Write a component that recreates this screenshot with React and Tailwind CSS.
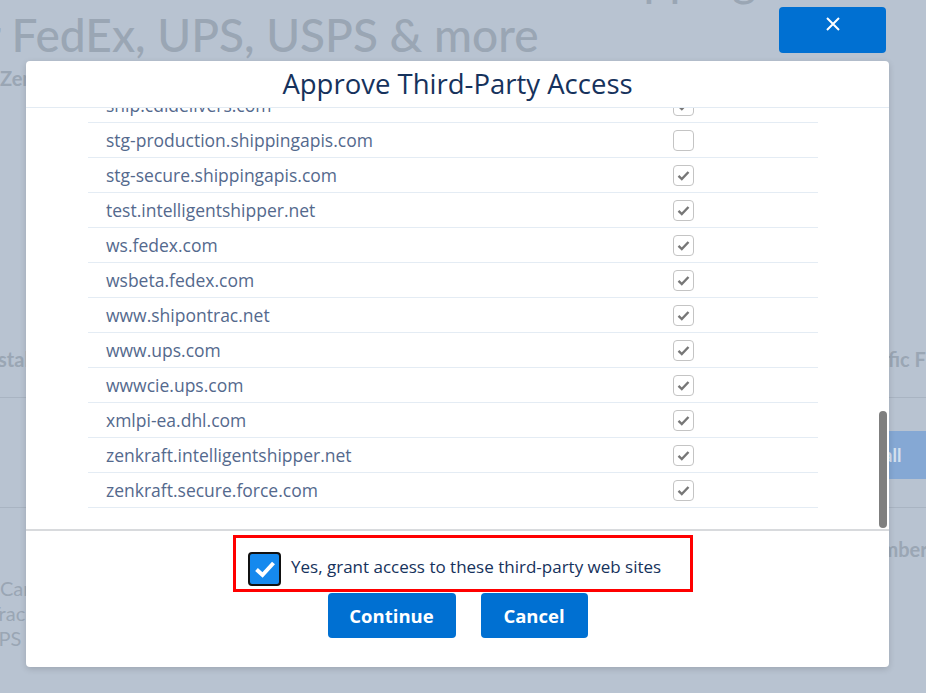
import { useState } from "react";

const domains = [
    { name: "ship.cdldelivers.com", checked: true },
    { name: "stg-production.shippingapis.com", checked: false },
    { name: "stg-secure.shippingapis.com", checked: true },
    { name: "test.intelligentshipper.net", checked: true },
    { name: "ws.fedex.com", checked: true },
    { name: "wsbeta.fedex.com", checked: true },
    { name: "www.shipontrac.net", checked: true },
    { name: "www.ups.com", checked: true },
    { name: "wwwcie.ups.com", checked: true },
    { name: "xmlpi-ea.dhl.com", checked: true },
    { name: "zenkraft.intelligentshipper.net", checked: true },
    { name: "zenkraft.secure.force.com", checked: true },
];

function SmallCheck({ checked }) {
    return (
        <div className="w-[21px] h-[21px] rounded-[4px] border-[1.5px] border-[#c4c4c4] bg-white flex items-center justify-center">
            {checked && (
                <svg width="13" height="11" viewBox="0 0 13 11">
                    <path d="M1.5 5.8 L4.8 9 L11.5 2" fill="none" stroke="#777" strokeWidth="2.4" />
                </svg>
            )}
        </div>
    );
}

export default function App() {
    const [granted, setGranted] = useState(true);

    return (
        <div className="relative w-[926px] h-[693px] overflow-hidden bg-[#b8c3d1] font-['Lato',sans-serif] text-[#9aa6b4]">
            {/* page behind the overlay */}
            <div className="-mt-[49px] pl-[582px] text-[46px] leading-[56px] font-medium whitespace-nowrap">Shipping</div>
            <div className="-ml-[16px] text-[46px] leading-[56px] font-medium whitespace-nowrap">r FedEx, UPS, USPS &amp; more</div>
            <div className="mt-[3px] text-[20px] leading-[24px] font-bold">Zenkraft</div>

            <div className="mt-[257px] mb-[26px] h-[24px] flex items-center text-[20px] font-bold whitespace-nowrap">
                <span className="-ml-[19px]">Install</span>
                <span className="ml-[806px]">Specific Fields</span>
            </div>
            <div className="h-px bg-[#a9b4c2]" />
            <div className="h-[109px] flex items-start pt-[33px]">
                <div className="ml-[830px] w-[120px] h-[48px] rounded bg-[#85a8d4] text-[#d4e0ee] font-bold text-[18px] flex items-center justify-end pr-[46px] whitespace-nowrap">
                    Select all
                </div>
            </div>
            <div className="h-px bg-[#a9b4c2]" />
            <div className="mt-[29px] pl-[855px] text-[20px] leading-[24px] font-bold whitespace-nowrap">Number</div>
            <div className="mt-[15px] text-[20px] leading-[25px] whitespace-nowrap">
                <div>Carriers</div>
                <div className="-ml-[11px]">Tracking</div>
                <div className="-ml-[27px]">USPS</div>
            </div>

            {/* close button */}
            <button className="absolute left-[779px] top-[7px] w-[107px] h-[46px] rounded-[4px] bg-[#0070d2] flex justify-center pt-[10px]">
                <svg width="14" height="14" viewBox="0 0 14 14">
                    <path d="M1 1 L13 13 M13 1 L1 13" stroke="#fff" strokeWidth="2" />
                </svg>
            </button>

            {/* modal */}
            <div className="absolute left-[26px] top-[61px] w-[863px] h-[606px] bg-white rounded-[4px] shadow-[0_2px_6px_rgba(0,0,0,0.15)] flex flex-col font-['Open_Sans',sans-serif]">
                <div className="h-[47px] shrink-0 border-b border-[#e3ebf3] flex items-center justify-center">
                    <h2 className="text-[27.5px] leading-[32px] font-medium text-[#16325c] pb-[1px]">Approve Third-Party Access</h2>
                </div>

                <div className="relative h-[423px] shrink-0 overflow-hidden border-b-2 border-[#d8dadd]">
                    <div className="-mt-[20px] ml-[62px] w-[730px]">
                        {domains.map((d) => (
                            <div key={d.name} className="h-[35px] border-b border-[#e4ecf4] flex items-center">
                                <div className="w-[585px] pl-[18px] text-[17.5px] text-[#54698d]">{d.name}</div>
                                <SmallCheck checked={d.checked} />
                            </div>
                        ))}
                    </div>
                    <div className="absolute right-[2px] top-[303px] w-[8px] h-[117px] rounded-full bg-[#7f7f7f]" />
                </div>

                <div className="flex flex-col items-center pt-[4px]">
                    <label className="ml-[11px] w-[460px] h-[57px] border-[3px] border-[#ff0000] flex items-end pl-[12px] pb-[3px] cursor-pointer">
                        <button
                            onClick={() => setGranted(!granted)}
                            className="w-[33px] h-[34px] rounded-[4px] border-2 border-[#111] bg-[#1589ee] flex items-center justify-center"
                        >
                            {granted && (
                                <svg width="22" height="18" viewBox="0 0 22 18">
                                    <path d="M2.5 9.5 L8.5 15 L19.5 3" fill="none" stroke="#fff" strokeWidth="4" />
                                </svg>
                            )}
                        </button>
                        <span className="ml-[10px] mb-[7px] text-[17px] text-[#16325c] whitespace-nowrap">
                            Yes, grant access to these third-party web sites
                        </span>
                    </label>
                    <div className="flex gap-[25px] mt-[1px]">
                        <button className="w-[128px] h-[45px] rounded-[4px] bg-[#0070d2] text-white font-bold text-[18.5px]">Continue</button>
                        <button className="w-[107px] h-[45px] rounded-[4px] bg-[#0070d2] text-white font-bold text-[18.5px]">Cancel</button>
                    </div>
                </div>
            </div>
        </div>
    );
}
